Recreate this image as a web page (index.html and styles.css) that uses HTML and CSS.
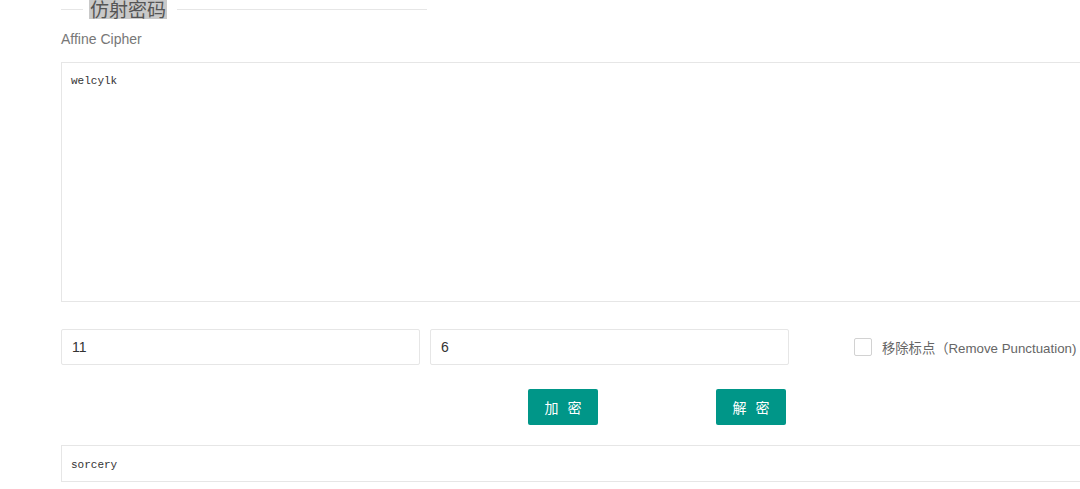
FILE: index.html
```html
<!DOCTYPE html>
<html lang="zh">
<head>
<meta charset="utf-8">
<title>仿射密码</title>
<link rel="stylesheet" href="styles.css">
</head>
<body>
<div class="page">
  <div class="legend">
    <span class="legend-line short"></span>
    <span class="legend-title">仿射密码</span>
    <span class="legend-line long"></span>
  </div>
  <div class="subtitle">Affine Cipher</div>
  <div class="textarea">welcylk</div>
  <div class="key-row">
    <div class="input">11</div>
    <div class="input">6</div>
    <label class="check">
      <span class="box"></span>
      <span class="check-text">移除标点（Remove Punctuation)</span>
    </label>
  </div>
  <div class="btn-row">
    <button class="btn">加 密</button>
    <button class="btn">解 密</button>
  </div>
  <div class="output">sorcery</div>
</div>
</body>
</html>
```

FILE: styles.css
```css
html, body {
  margin: 0;
  padding: 0;
  background: #fff;
  overflow: hidden;
  font-family: "Liberation Sans", Arial, "Noto Sans CJK SC", sans-serif;
}
.page {
  padding-left: 61px;
  width: 1040px;
}
.legend {
  display: flex;
  align-items: center;
  height: 20px;
  margin-top: -1px;
}
.legend-line {
  height: 1px;
  background: #e6e6e6;
  flex: none;
}
.legend-line.short { width: 22px; }
.legend-line.long { width: 250px; }
.legend-title {
  flex: none;
  margin: 0 10px 0 6px;
  background: #c9c9c9;
  color: #555;
  font-size: 19px;
  line-height: 20px;
  padding: 0 1px;
  white-space: nowrap;
  font-family: "Noto Sans CJK SC", sans-serif;
}
.subtitle {
  margin-top: 10px;
  font-size: 14px;
  line-height: 20px;
  color: #777;
}
.textarea {
  margin-top: 13px;
  height: 240px;
  box-sizing: border-box;
  border: 1px solid #e6e6e6;
  padding: 11px 9px;
  font-family: "Liberation Mono", "Courier New", monospace;
  font-size: 11px;
  line-height: 14px;
  color: #333;
}
.key-row {
  display: flex;
  align-items: center;
  margin-top: 27px;
  height: 36px;
}
.input {
  width: 359px;
  height: 36px;
  box-sizing: border-box;
  border: 1px solid #e6e6e6;
  border-radius: 2px;
  padding: 0 10px;
  font-size: 14px;
  line-height: 34px;
  color: #333;
  margin-right: 10px;
}
.check {
  display: flex;
  align-items: center;
  margin-left: 55px;
}
.box {
  width: 16px;
  height: 16px;
  border: 1px solid #d2d2d2;
  border-radius: 2px;
  background: #fff;
  margin-right: 10px;
}
.check-text {
  font-size: 13.3px;
  color: #666;
  white-space: nowrap;
}
.btn-row {
  display: flex;
  margin-top: 24px;
  padding-left: 467px;
  gap: 118px;
}
.btn {
  width: 70px;
  height: 36px;
  border: none;
  border-radius: 2px;
  background: #009688;
  color: #fff;
  font-size: 14px;
  letter-spacing: 3px;
  text-indent: 3px;
  font-family: "Noto Sans CJK SC", sans-serif;
  padding: 0;
  cursor: pointer;
}
.output {
  margin-top: 20px;
  height: 37px;
  box-sizing: border-box;
  border: 1px solid #e6e6e6;
  padding: 0 9px;
  font-family: "Liberation Mono", "Courier New", monospace;
  font-size: 11px;
  line-height: 38px;
  color: #333;
}
```
